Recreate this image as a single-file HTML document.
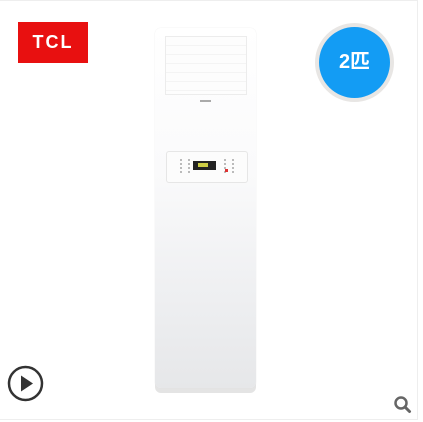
<!DOCTYPE html><html><head><style>
body{margin:0;width:423px;height:422px;background:#fff;position:relative;overflow:hidden;font-family:"Liberation Sans","Noto Sans CJK SC",sans-serif}
.a{position:absolute}
</style></head><body>
<div class="a" style="left:0;top:0;width:417px;height:1px;background:#eee"></div>
<div class="a" style="left:417px;top:0;width:1px;height:420px;background:#eee"></div>
<div class="a" style="left:0;top:419px;width:417px;height:1px;background:#eee"></div>
<div class="a" style="left:18px;top:22px;width:70px;height:41px;background:#e81010;color:#fff;font-weight:bold;font-size:18px;line-height:41px;text-align:center;letter-spacing:2px">TCL</div>
<div class="a" style="left:315px;top:23px;width:79px;height:79px;border-radius:50%;background:#e8e6e4"></div>
<div class="a" style="left:319px;top:27px;width:71px;height:71px;border-radius:50%;background:#139cf4;color:#fff;font-size:20px;font-weight:bold;line-height:71px;text-align:center">2匹</div>
<div class="a" style="left:155px;top:28px;width:101px;height:360px;border-radius:6px;background:linear-gradient(#fff 0%,#fafafb 40%,#eeeff1 75%,#e6e7e9 100%);box-shadow:0 0 1px #ddd,0 5px 0 #e4e4e4"></div>
<div class="a" style="left:165px;top:36px;width:80px;height:57px;border:1px solid #ececec;background:repeating-linear-gradient(#fdfdfd 0 8px,#f4f4f4 8px 9px)"></div>
<div class="a" style="left:200px;top:100px;width:11px;height:2px;background:#aaa"></div>
<div class="a" style="left:166px;top:151px;width:80px;height:30px;border:1px solid #e6e6e6;border-radius:3px;background:#fcfcfc"></div>
<div class="a" style="left:193px;top:161px;width:23px;height:9px;background:#222"></div>
<div class="a" style="left:198px;top:163px;width:10px;height:4px;background:#cc4"></div>
<div class="a" style="left:180px;top:159px;width:6px;height:14px;border-left:2px dotted #bbb;border-right:2px dotted #bbb"></div>
<div class="a" style="left:224px;top:159px;width:6px;height:14px;border-left:2px dotted #bbb;border-right:2px dotted #bbb"></div>
<div class="a" style="left:225px;top:169px;width:3px;height:3px;background:#d33"></div>
<svg class="a" style="left:7px;top:365px" width="38" height="38"><circle cx="18.5" cy="18.5" r="16.5" fill="#fff" stroke="#333" stroke-width="2.5"/><path d="M14 10.5L26 18.5L14 26.5Z" fill="#333"/></svg>
<svg class="a" style="left:393px;top:395px" width="20" height="20"><circle cx="8" cy="8" r="5.5" fill="none" stroke="#666" stroke-width="2.5"/><path d="M12 12L16.5 16.5" stroke="#666" stroke-width="3" stroke-linecap="round"/></svg>
</body></html>
